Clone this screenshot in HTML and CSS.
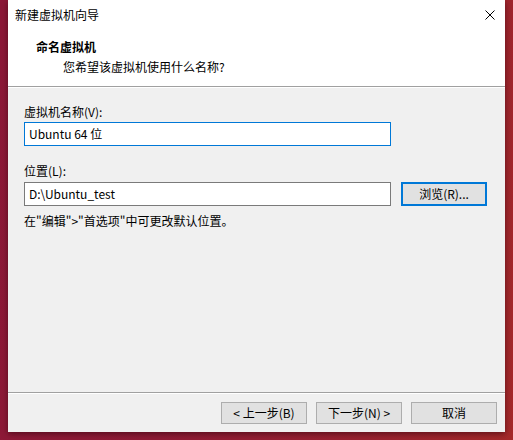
FILE: index.html
```html
<!DOCTYPE html>
<html lang="zh-CN">
<head>
<meta charset="utf-8">
<title>新建虚拟机向导</title>
<link rel="stylesheet" href="styles.css">
</head>
<body>
<div class="dialog">
  <div class="header">
    <div class="titlebar">
      <span class="title">新建虚拟机向导</span>
      <span class="close"><svg width="10" height="10" viewBox="0 0 10 10"><path d="M0.5 0.5L9.5 9.5M9.5 0.5L0.5 9.5" stroke="#000" stroke-width="1" fill="none"/></svg></span>
    </div>
    <div class="heading">命名虚拟机</div>
    <div class="subtitle">您希望该虚拟机使用什么名称?</div>
  </div>
  <div class="content">
    <div class="label first">虚拟机名称(V):</div>
    <div class="input focused">Ubuntu 64 位</div>
    <div class="label second">位置(L):</div>
    <div class="row">
      <div class="input">D:\Ubuntu_test</div>
      <div class="btn default">浏览(R)...</div>
    </div>
    <div class="note">在"编辑"&gt;"首选项"中可更改默认位置。</div>
  </div>
  <div class="footer">
    <div class="btn">&lt; 上一步(B)</div>
    <div class="btn">下一步(N) &gt;</div>
    <div class="btn">取消</div>
  </div>
</div>
</body>
</html>
```
FILE: styles.css
```css
html, body {
  margin: 0;
  padding: 0;
  height: 100%;
}
body {
  width: 513px;
  height: 440px;
  overflow: hidden;
  background: linear-gradient(100deg, #8c1838 0%, #8f1b36 40%, #9a2230 75%, #a5292a 100%);
  font-family: "Noto Sans CJK SC", "Noto Sans", sans-serif;
  font-size: 12px;
  line-height: 16px;
  color: #000;
}
.dialog {
  margin-left: 8px;
  width: 497px;
  height: 432px;
  background: #f0f0f0;
  display: flex;
  flex-direction: column;
  box-shadow: 0 2px 6px rgba(40, 0, 10, 0.55);
}
.header {
  background: #fff;
  height: 86px;
  border-bottom: 1px solid #a0a0a0;
  box-sizing: content-box;
}
.titlebar {
  height: 30px;
  display: flex;
  align-items: center;
  justify-content: space-between;
  padding-left: 7px;
  padding-right: 10px;
}
.close {
  display: flex;
  width: 10px;
  height: 10px;
}
.heading {
  margin-top: 9px;
  padding-left: 28px;
  font-weight: bold;
}
.subtitle {
  margin-top: 4px;
  padding-left: 55px;
}
.content {
  flex: 1;
  padding: 17px 0 0 16px;
  border-top: 1px solid #fff;
}
.label.first {
  margin-top: -1px;
}
.label.second {
  margin-top: 17px;
}
.input {
  margin-top: 2px;
  width: 367px;
  height: 24px;
  box-sizing: border-box;
  background: #fff;
  border: 1px solid #7a7a7a;
  padding-left: 4px;
  line-height: 22px;
}
.input.focused {
  border-color: #0078d7;
}
.row {
  display: flex;
  align-items: flex-start;
  margin-top: 3px;
}
.row .input {
  margin-top: 0;
}
.btn {
  width: 86px;
  height: 22px;
  box-sizing: border-box;
  background: #e1e1e1;
  border: 1px solid #adadad;
  display: flex;
  align-items: center;
  justify-content: center;
}
.btn.default {
  margin-left: 10px;
  height: 24px;
  border: 2px solid #0078d7;
}
.note {
  margin-top: 7px;
}
.footer {
  border-top: 1px solid #a0a0a0;
  box-shadow: inset 0 1px 0 #fff;
  padding: 9px 8px 8px 0;
  display: flex;
  justify-content: flex-end;
  gap: 9px;
}
```
